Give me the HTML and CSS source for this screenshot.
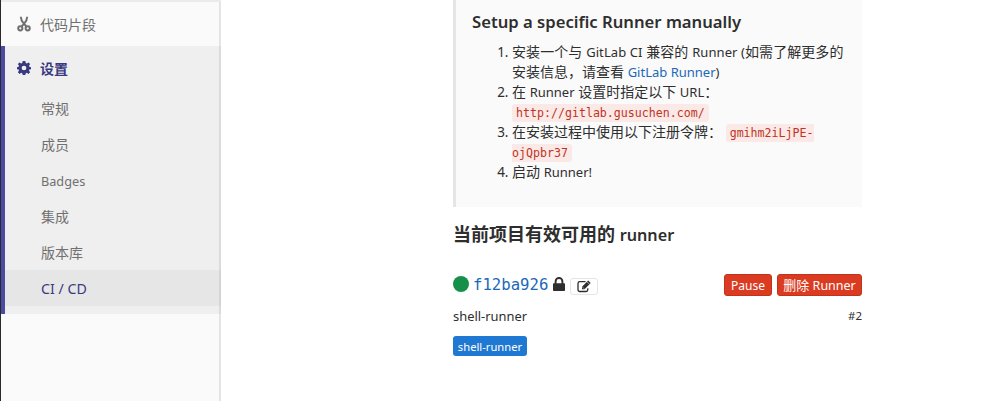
FILE: index.html
```html
<!DOCTYPE html>
<html lang="zh-CN">
<head>
<meta charset="utf-8">
<title>CI / CD</title>
<link rel="stylesheet" href="styles.css">
</head>
<body>
<div class="page">
  <nav class="sidebar">
    <div class="divider"></div>
    <a class="item">
      <svg class="icon" viewBox="0 0 14 16" fill="none" stroke="#707070" stroke-width="2"><path d="M3.800.8c0 2.400 1.200 4.800 3.200 7l2.300 2.500M10.200.8c0 2.400-1.200 4.800-3.200 7l-2.300 2.500"/><circle cx="3.300" cy="12.300" r="2.100"/><circle cx="10.700" cy="12.300" r="2.100"/></svg>
      <span class="label">代码片段</span>
    </a>
    <div class="section">
      <a class="item current">
        <svg class="icon" viewBox="0 0 16 16" fill="#393982" fill-rule="evenodd"><path d="M6.500 0h3l.5 2.400 1.100.5 2-1.300 1.900 1.900-1.300 2 .5 1.100 1.800.4v2.400l-1.800.4-.5 1.100 1.300 2-1.900 1.900-2-1.300-1.100.5L9.500 16h-3L6 14l-1.100-.5-2 1.300L1 12.900l1.300-2-.5-1.100L0 9.400V7l1.800-.4.5-1.100L1 3.500l1.900-1.900 2 1.300L6 2.400zM8 5.300a2.700 2.700 0 1 0 0 5.400 2.700 2.700 0 0 0 0-5.400z"/></svg>
        <span class="label">设置</span>
      </a>
      <a class="sub">常规</a>
      <a class="sub">成员</a>
      <a class="sub"><span class="badges">Badges</span></a>
      <a class="sub">集成</a>
      <a class="sub">版本库</a>
      <a class="sub active"><span class="cicd">CI / CD</span></a>
    </div>
  </nav>
  <main class="content">
    <section class="card">
      <h4 class="title">Setup a specific Runner manually</h4>
      <ol class="steps">
        <li><span class="wide">安装一个与 <span class="en">GitLab CI</span> 兼容的 <span class="en">Runner (</span>如需了解更多的</span><br>安装信息，请查看 <a class="link en">GitLab Runner</a><span class="en">)</span></li>
        <li>在 <span class="en">Runner</span> 设置时指定以下 <span class="en">URL</span>：<br><code>http://gitlab.gusuchen.com/</code></li>
        <li>在安装过程中使用以下注册令牌： <code>gmihm2iLjPE-<br>ojQpbr37</code></li>
        <li>启动 <span class="en">Runner!</span></li>
      </ol>
    </section>
    <h4 class="heading">当前项目有效可用的 <span class="heading-en">runner</span></h4>
    <div class="runner">
      <span class="dot"></span>
      <a class="hash">f12ba926</a>
      <svg class="lock" viewBox="0 0 12 14"><path d="M2.600 7V4.400a3.400 3.400 0 0 1 6.800 0V7" fill="none" stroke="#2e2e2e" stroke-width="1.900"/><rect y="6.200" width="12" height="7.800" rx=".8" fill="#2e2e2e"/></svg>
      <span class="edit"><svg viewBox="0 0 15 13" fill="none" stroke="#2e2e2e"><path d="M8.500 1.700H2.700A1.700 1.700 0 0 0 1 3.400v6.400a1.700 1.700 0 0 0 1.700 1.700h6.400a1.700 1.700 0 0 0 1.700-1.700V8.200" stroke-width="1.300"/><path d="M5 9.300V6.800L11.200.6l2.500 2.500-6.200 6.200z" fill="#2e2e2e" stroke="none"/><path d="M10 1.800l2.500 2.500" stroke="#fff" stroke-width=".6"/><path d="M5.800 7.400l1.100 1.100" stroke="#fff" stroke-width=".8"/></svg></span>
      <span class="actions"><button class="btn pause">Pause</button><button class="btn remove">删除 <span>Runner</span></button></span>
    </div>
    <div class="meta"><span class="desc">shell-runner</span><span class="num">#2</span></div>
    <span class="tag">shell-runner</span>
  </main>
</div>
</body>
</html>
```
FILE: styles.css
```css
* { box-sizing: border-box; }
body {
  margin: 0;
  background: #fff;
  color: #2e2e2e;
  font: 14px/20px "Noto Sans", "Noto Sans CJK SC", sans-serif;
}
.page { display: flex; height: 401px; overflow: hidden; border-left: 1px solid #292929; }
.sidebar {
  width: 220px;
  background: #fafafa;
  box-shadow: inset -2px 0 0 #e5e5e5;
  color: #707070;
}
.divider { height: 2px; background: #ebebeb; }
.item { display: flex; align-items: center; height: 44px; padding: 1px 0 0 16px; }
.icon { width: 14px; height: 16px; margin: -2px 9px 0 0; }
.section {
  height: 268px;
  background: #efefef;
  border-left: 4px solid #4b4ba3;
  box-shadow: inset -2px 0 0 #dbdbdb;
}
.current { padding-left: 12px; color: #393982; font-weight: 700; }
.current .icon { height: 14px; }
.sub { display: flex; align-items: center; height: 36px; padding: 2px 0 0 36px; }
.active { background: #e6e6e6; color: #393982; box-shadow: inset -2px 0 0 #d3d3d3; }
.badges { font-size: 12.700px; }
.cicd { font-size: 14.200px; }
.content { width: 409px; margin-left: 232px; }
.card { height: 207px; padding: 11px 0 0 16px; background: #fafafa; border-left: 3px solid #e5e5e5; }
.title { margin: 0; font: 600 16.650px/22px "Noto Sans", sans-serif; white-space: nowrap; }
.steps { margin: 9px 0 0; padding-left: 40px; white-space: nowrap; }
.steps li::marker { font-size: 13.500px; }
.wide { letter-spacing: .08px; }
.en { font-size: 13px; line-height: 1; }
.link { color: #1b69b6; }
code {
  padding: 2px 4px;
  border-radius: 3px;
  background: #fbe9e7;
  color: #c0341d;
  font: 11.620px/14px "DejaVu Sans Mono", monospace;
}
.heading { margin: 16px 0 0; font: 700 18px/22px "Noto Sans", "Noto Sans CJK SC", sans-serif; white-space: nowrap; }
.heading-en { font-size: 16.200px; font-weight: 600; line-height: 1; }
.runner { display: flex; align-items: center; height: 24px; margin-top: 28px; }
.dot { width: 16px; height: 16px; margin: -3px 5px 0 0; border-radius: 50%; background: #168f48; }
.hash { margin-left: -1px; color: #1b69b6; font: 15.650px/20px "DejaVu Sans Mono", monospace; }
.lock { width: 12px; height: 14px; margin: 0 5px 3px 5px; }
.edit {
  display: flex; align-items: center; justify-content: center;
  width: 28px; height: 17px; margin-top: 2px;
  border: 1px solid #e5e5e5; border-radius: 3px;
}
.edit svg { width: 15px; height: 13px; }
.actions { display: flex; gap: 5px; margin-left: auto; }
.btn {
  height: 22px; padding: 1px 0 0; border: 1px solid #c0341d; border-radius: 3px;
  background: #db3b21; color: #fff;
  font: 13px/18px "Noto Sans", "Noto Sans CJK SC", sans-serif; white-space: nowrap;
}
.pause { width: 48px; font-size: 12px; }
.remove { width: 85px; }
.remove span { font-size: 12.500px; }
.meta { display: flex; justify-content: space-between; height: 20px; margin-top: 9px; font-size: 12.900px; }
.num { font-size: 11.500px; }
.tag {
  display: block; width: 74px; height: 20px; margin-top: 10px;
  border-radius: 3px; background: #1f78d1; color: #fff;
  font-size: 11.200px; line-height: 21px; text-align: center;
}
```
